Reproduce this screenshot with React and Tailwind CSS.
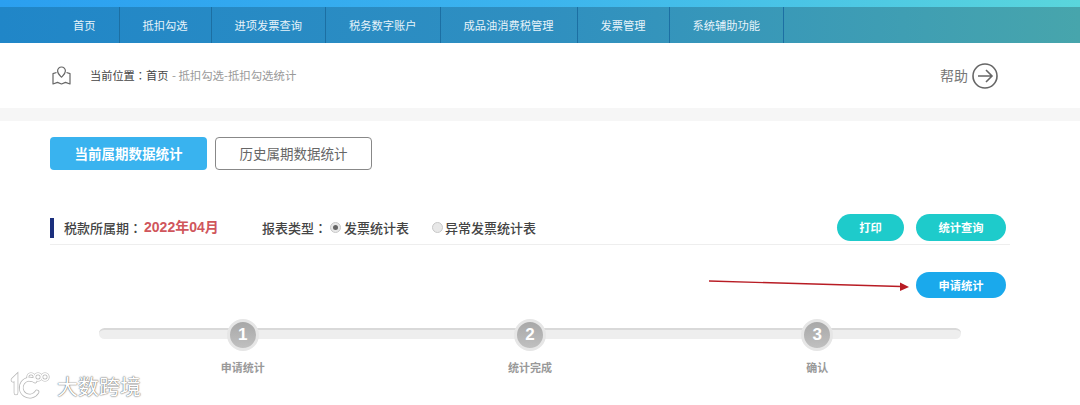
const navItems = ["首页", "抵扣勾选", "进项发票查询", "税务数字账户", "成品油消费税管理", "发票管理", "系统辅助功能"];
const steps = ["申请统计", "统计完成", "确认"];
const font = { fontFamily: '"Noto Sans CJK SC", "Liberation Sans", sans-serif' };
const colon = { fontFamily: '"Noto Sans CJK TC", sans-serif' };

function Radio({ checked }) {
  return (
    <span className="w-[11px] h-[11px] rounded-full border border-[#c8c8c8] bg-[#e8e8e8] flex items-center justify-center shrink-0">
      {checked && <span className="w-[5px] h-[5px] rounded-full bg-[#666]" />}
    </span>
  );
}

function LogoStrokes({ color, extra }) {
  return (
    <g stroke={color} fill="none" strokeLinecap="round">
      <path d="M4 9 L7 6 V22" strokeWidth={3.2 + extra} />
      <path d="M26 10 A8.5 8.5 0 1 0 28 21" strokeWidth={3.2 + extra} />
      <circle cx="22" cy="6" r="3.2" strokeWidth={1.4 + extra} />
      <circle cx="29" cy="6" r="3.2" strokeWidth={1.4 + extra} />
      <circle cx="36" cy="6" r="3.2" strokeWidth={1.4 + extra} />
    </g>
  );
}

function Watermark() {
  return (
    <div className="absolute left-[9px] top-[371px] flex items-center gap-[6px]">
      <svg width="42" height="28" viewBox="0 0 42 28">
        <LogoStrokes color="#b5b5b5" extra={1.4} />
        <LogoStrokes color="#ffffff" extra={0} />
      </svg>
      <span className="text-[21px] leading-[26px] text-white [text-shadow:0_0_1.5px_#666,0_0_1px_#666]">大数跨境</span>
    </div>
  );
}

export default function App() {
  return (
    <div className="relative w-[1080px] h-[405px] overflow-hidden bg-white" style={font}>
      <div className="h-[7px] bg-gradient-to-r from-[#2b9ff0] via-[#3cb4ee] to-[#5ad6dc]" />
      <nav className="h-[36px] pl-[50px] flex bg-gradient-to-r from-[#2086c8] via-[#2f8fc0] to-[#47a5ac]">
        {navItems.map((item) => (
          <div key={item} className="px-[23px] flex items-center border-r border-[#1c6fa3] text-[11.25px] text-[#e6f3fa] whitespace-nowrap">
            {item}
          </div>
        ))}
      </nav>

      <div className="h-[65px] pl-[52px] pr-[82px] flex items-center justify-between">
        <div className="flex items-center">
          <svg width="19" height="20" viewBox="0 0 19 20" fill="none" stroke="#666" strokeWidth="1.2" strokeLinejoin="round" className="mr-[19px]">
            <path d="M9.5 1a3.9 3.9 0 0 0-3.9 3.9c0 2.6 2.4 4.6 3.9 6.3 1.5-1.7 3.9-3.7 3.9-6.3A3.9 3.9 0 0 0 9.5 1z" />
            <path d="M4.5 6.5 1 7.6V18l4.5-1.6 4 1.6 4-1.6L18 18V7.6l-3.5-1.1" />
          </svg>
          <span className="text-[11.2px] text-[#444] whitespace-nowrap">当前位置<span style={colon}>：</span>首页</span>
          <span className="text-[11.4px] text-[#999] whitespace-nowrap ml-[1px]">&nbsp;- 抵扣勾选-抵扣勾选统计</span>
        </div>
        <div className="flex items-center gap-[4px]">
          <span className="text-[14px] text-[#777]">帮助</span>
          <svg width="26" height="26" viewBox="0 0 26 26" fill="none" stroke="#666" strokeWidth="1.6">
            <circle cx="13" cy="13" r="12" />
            <path d="M6 13h14M14 7l6 6-6 6" />
          </svg>
        </div>
      </div>

      <div className="h-[13px] bg-[#f6f6f6]" />

      <div className="pl-[50px] pt-[16px] flex gap-[8px]">
        <div className="w-[157px] h-[33px] rounded-[4px] bg-[#39b3ef] text-white font-bold text-[13.5px] flex items-center justify-center">当前属期数据统计</div>
        <div className="w-[157px] h-[33px] rounded-[4px] border border-[#888] text-[#666] text-[13.5px] flex items-center justify-center">历史属期数据统计</div>
      </div>

      <div className="ml-[50px] mt-[44px] w-[960px] h-[31px] pb-[3px] border-b border-[#eeeeee] flex items-center">
        <span className="w-[4px] h-[20px] bg-[#1b2f7d] mr-[10px]" />
        <span className="text-[13px] font-medium text-[#444] whitespace-nowrap mr-[2px]">税款所属期<span style={colon}>：</span></span>
        <span className="text-[14px] font-bold text-[#d0565c] w-[118px] whitespace-nowrap" style={{ fontFamily: '"Liberation Sans", "Noto Sans CJK SC", sans-serif' }}>2022年04月</span>
        <span className="text-[13px] font-medium text-[#444] whitespace-nowrap mr-[3px]">报表类型<span style={colon}>：</span></span>
        <Radio checked />
        <span className="text-[13px] font-medium text-[#444] ml-[3px] mr-[23px] whitespace-nowrap">发票统计表</span>
        <Radio />
        <span className="text-[13px] font-medium text-[#444] ml-[2px] whitespace-nowrap">异常发票统计表</span>
        <button className="ml-auto w-[67px] h-[27px] rounded-full bg-[#1ecbcb] text-white font-bold text-[11.25px]">打印</button>
        <button className="ml-[12px] mr-[4px] w-[90px] h-[27px] rounded-full bg-[#1ecbcb] text-white font-bold text-[11.25px]">统计查询</button>
      </div>

      <div className="mt-[26px] pl-[916px]">
        <button className="w-[90px] h-[26px] rounded-full bg-[#1aa9ec] text-white font-bold text-[11.25px]">申请统计</button>
      </div>

      <div className="ml-[99px] mt-[30px] w-[862px]">
        <div className="h-[11px] rounded-full bg-[#eeeeee] border-t-2 border-[#d9d9d9] grid grid-cols-3">
          {steps.map((step, i) => (
            <div key={step} className="flex items-center justify-center h-[9px]">
              <div className="w-[32px] h-[32px] shrink-0 rounded-full bg-gradient-to-b from-[#a8a8a8] to-[#c0c0c0] border-[3px] border-[#e6e6e6] text-white font-bold text-[17px] flex items-center justify-center" style={{ fontFamily: '"Liberation Sans", sans-serif' }}>
                {i + 1}
              </div>
            </div>
          ))}
        </div>
        <div className="mt-[20px] grid grid-cols-3">
          {steps.map((step) => (
            <div key={step} className="text-center text-[11px] font-bold text-[#999]">{step}</div>
          ))}
        </div>
      </div>

      <svg width="210" height="14" viewBox="0 0 210 14" className="absolute left-[705px] top-[277px]" fill="none">
        <path d="M4 4 L196 9.5" stroke="#b81c24" strokeWidth="1.4" />
        <path d="M195 5.5 L204 10 L195 14 Z" fill="#b81c24" />
      </svg>

      <Watermark />
    </div>
  );
}
